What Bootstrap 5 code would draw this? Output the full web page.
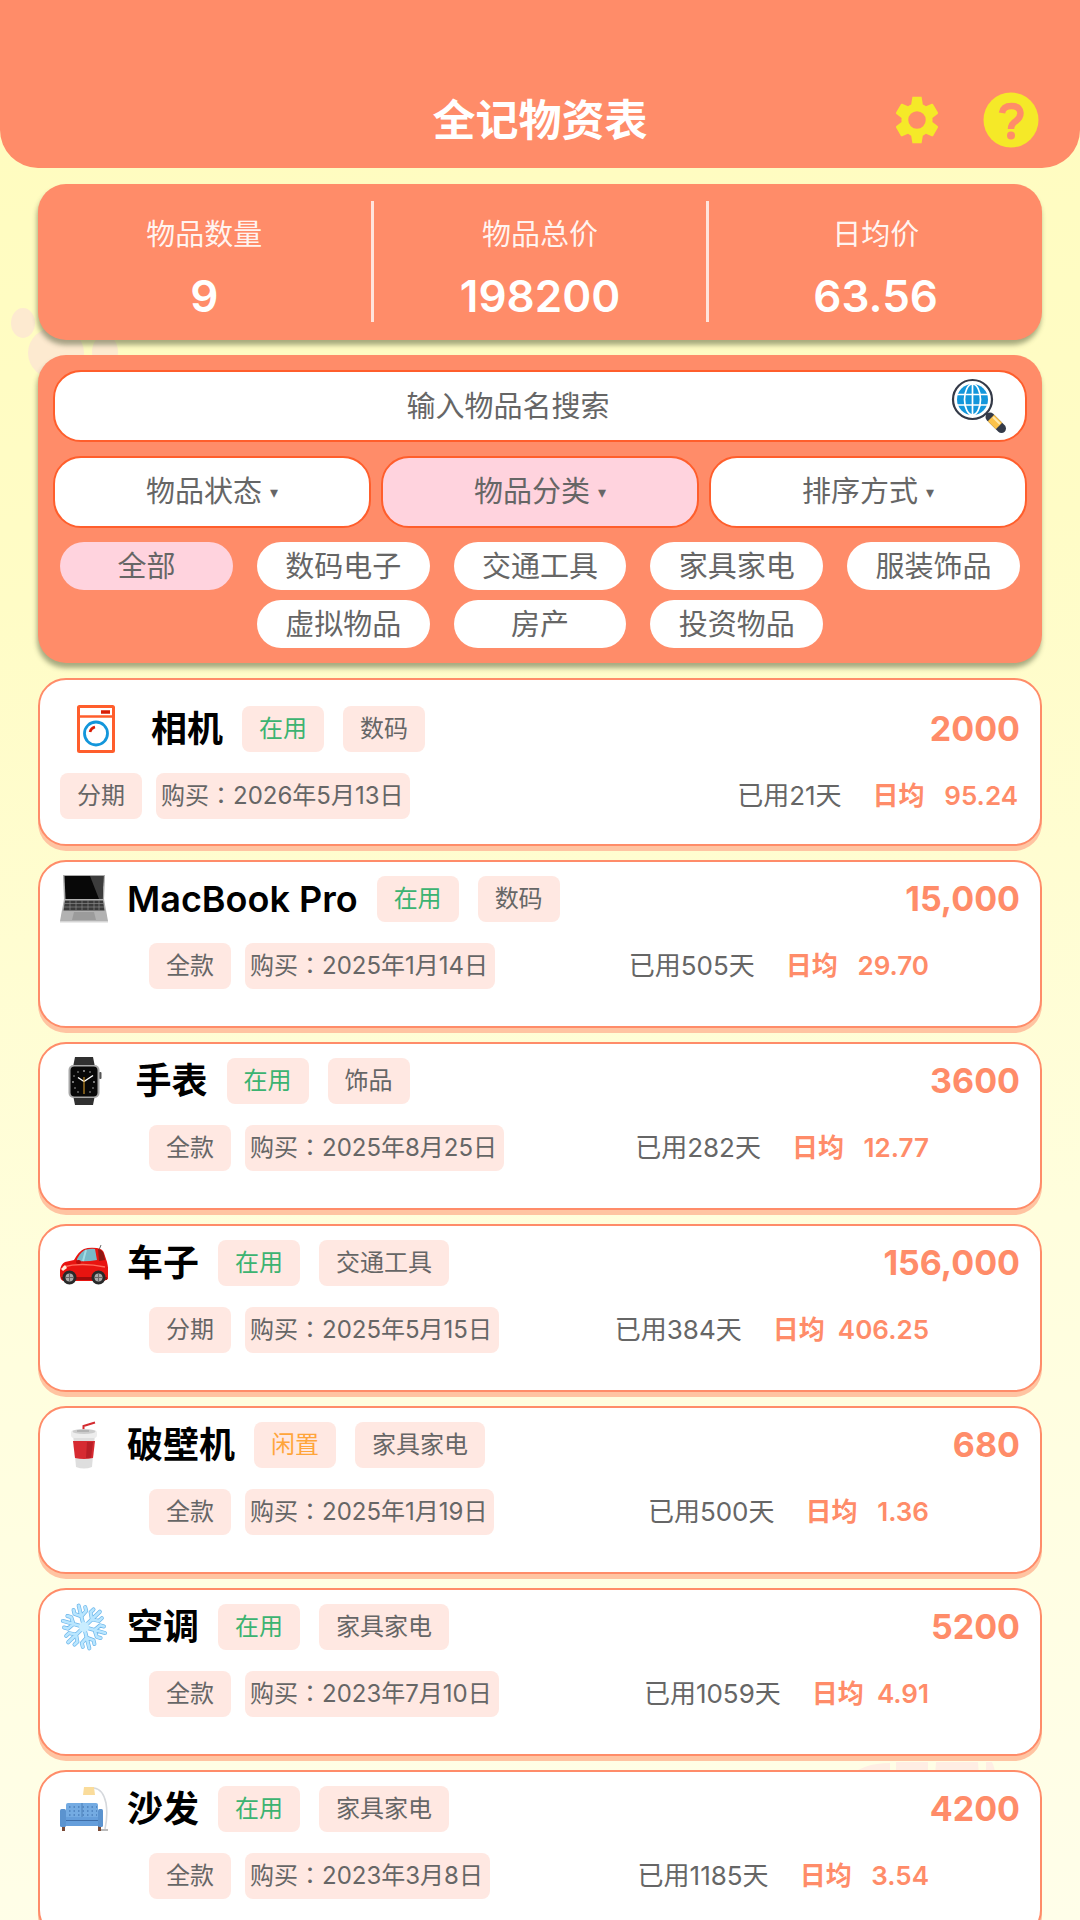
<!DOCTYPE html>
<html lang="zh-CN">
<head>
<meta charset="utf-8">
<meta name="viewport" content="width=device-width, initial-scale=1">
<title>全记物资表</title>
<link href="https://cdn.jsdelivr.net/npm/bootstrap@5.3.0/dist/css/bootstrap.min.css" rel="stylesheet">
<style>
:root{--coral:#ff8c69;--coral-deep:#ff5e2c;--blush:#ffd3de;--tag:#ffe8e2;--ink:#666}
body{font-family:Inter,"Noto Sans CJK SC",sans-serif;color:var(--ink);background:linear-gradient(175deg,#fffcbe 0%,#fffcc6 30%,#fffedd 65%,#fffee9 100%)}
.app-shell{height:100vh;overflow-y:auto;scrollbar-width:none;isolation:isolate}
.app-shell::-webkit-scrollbar{display:none}
.paw{position:absolute;z-index:-1}
.paw-left{left:8px;top:300px}
.paw-right{right:76px;top:1760px}
.app-header{background:var(--coral);height:168px;border-radius:0 0 38px 38px;padding:72px 42px 0}
.app-title{font-size:43px;line-height:96px;font-weight:700;color:#fff}
.header-tools{gap:41px;right:41px;top:92px}
.page-body{padding:16px 38px}
.panel{background:var(--coral);border-radius:28px;box-shadow:-1px 5px 5px rgba(60,70,40,.45)}
.stats{height:156px;padding:17px 0 18px;margin-bottom:15px}
.stat+.stat{border-left:3px solid #ffe4dc}
.stat-label{font-size:29px;line-height:34px;margin-top:17px;color:rgba(255,255,255,.92)}
.stat-value{font-size:44px;line-height:52px;margin-top:18px;font-weight:600;color:#fff}
.filters{padding:15px;margin-bottom:15px}
.pill-box{height:72px;border:2px solid var(--coral-deep);border-radius:28px;background:#fff;color:var(--ink);font-size:29px;line-height:40px}
.search-input{padding:14px 54px 14px 14px;text-align:center}
.search-input::placeholder{color:var(--ink);opacity:1}
.search-input:focus{outline:none;box-shadow:none}
.search-go{right:20px;top:8px}
.filter-row{gap:10px;margin-top:14px}
.filter-btn{padding:0}
.filter-btn.is-open,.chip.is-open{background:var(--blush)}
.caret{font:16px/16px "DejaVu Sans",sans-serif;margin-left:8px;vertical-align:4px}
.chips{margin-top:14px;padding:0 7px;gap:10px 24px}
.chip{flex:0 0 calc((100% - 96px)/5);height:48px;border:0;border-radius:24px;background:#fff;color:var(--ink);font-size:29px;line-height:46px;padding:2px 0 0}
.item{min-height:168px;border:2px solid var(--coral);border-radius:28px;background:#fff;box-shadow:0 5px 0 #ffc4a2;padding:13px 20px;margin-bottom:14px}
.item-line{min-height:46px}
.item-line+.item-line{margin-top:20px}
.item-inset{padding:0 89px}
.item-icon{width:48px;height:48px;margin-right:19px;flex:none}
.item-icon-wide{width:72px}
.item-name{font-size:36px;line-height:46px;font-weight:600;color:#000;margin:0 19px 0 0}
.item-name:lang(zh){font-weight:700}
.tag{display:inline-block;height:46px;line-height:45px;font-size:24px;border-radius:8px;background:var(--tag);padding:0 17px;margin-right:19px}
.tag-pay{margin-right:14px}
.tag-date{font-family:Inter,"Noto Sans CJK TC",sans-serif;padding:0 7px 0 5px;margin:0}
.in-use{color:#3cb371}
.idle{color:#ffa53a}
.price{font-size:34px;line-height:46px;font-weight:700;color:var(--coral)}
.usage{font-size:26px;line-height:42px}
.daily{color:var(--coral);font-weight:600;margin:0 2px 0 31px}
.daily b{font-weight:700}
</style>
</head>
<body>
<div class="app-shell position-relative">
  <svg class="paw paw-left" width="112" height="90" viewBox="0 0 112 90" fill="#fdead0" aria-hidden="true"><ellipse cx="15" cy="23" rx="12" ry="15"/><ellipse cx="48" cy="53" rx="28" ry="26"/><ellipse cx="97" cy="52" rx="13" ry="17"/></svg>
  <svg class="paw paw-right" width="156" height="60" viewBox="0 0 156 60" fill="#ffeee4" aria-hidden="true"><path d="M0 60V18Q14 3 42 3V60zM48 2h32v58H48zM88 2h42l4 58H84zM138 2h6q3 6 3 14h-9z"/></svg>

  <header class="app-header position-relative text-center">
    <h1 class="app-title m-0">全记物资表</h1>
    <div class="header-tools position-absolute d-flex align-items-center">
      <button type="button" class="btn p-0 border-0 d-flex" aria-label="设置"><svg width="50" height="50" viewBox="0 0 24 24" fill="#f5e928"><path d="M19.400 13a7.800 7.800 0 0 0 0-2l2.500-1.900a.6.600 0 0 0 .1-.8l-2.200-3.800a.6.600 0 0 0-.7-.3l-2.800 1.200a7.500 7.500 0 0 0-1.500-.9L14.200.8H9.800L9.200 4.500a7.500 7.500 0 0 0-1.500.9L4.900 4.200a.6.600 0 0 0-.7.300L2 8.300a.6.600 0 0 0 .1.800L4.600 11a7.800 7.800 0 0 0 0 2l-2.500 1.900a.6.600 0 0 0-.1.800l2.200 3.800c.1.300.4.400.7.300l2.800-1.200a7.500 7.500 0 0 0 1.500.9l.6 3.700h4.400l.6-3.700a7.500 7.500 0 0 0 1.500-.9l2.800 1.200c.3.100.6 0 .7-.3l2.200-3.800a.6.600 0 0 0-.1-.8zM12 16.200a4.200 4.200 0 1 1 0-8.400 4.200 4.200 0 0 1 0 8.400z"/></svg></button>
      <button type="button" class="btn p-0 border-0 d-flex" aria-label="帮助"><svg width="56" height="56" viewBox="0 0 56 56"><circle cx="28" cy="28" r="27.500" fill="#f5e928"/><path d="M19 21Q20 14 28.500 14T37.500 21q0 4.500-4.500 8-5 3-5 8" fill="none" stroke="#ff8c69" stroke-width="6.500"/><circle cx="28" cy="43.500" r="4" fill="#ff8c69"/></svg></button>
    </div>
  </header>

  <main class="page-body">
    <section class="panel stats row g-0 text-center">
      <div class="col stat"><div class="stat-label">物品数量</div><div class="stat-value">9</div></div>
      <div class="col stat"><div class="stat-label">物品总价</div><div class="stat-value">198200</div></div>
      <div class="col stat"><div class="stat-label">日均价</div><div class="stat-value">63.56</div></div>
    </section>

    <section class="panel filters">
      <form class="position-relative" role="search">
        <input type="search" class="pill-box search-input w-100 d-block" placeholder="输入物品名搜索" aria-label="输入物品名搜索">
        <button type="button" class="search-go btn p-0 border-0 position-absolute d-flex" aria-label="搜索"><svg width="56" height="56" viewBox="0 0 56 56"><path d="M35 35l5 5" stroke="#343a48" stroke-width="2.500"/><path d="M39 39l11.500 11.500" stroke="#343a48" stroke-width="9" stroke-linecap="round"/><path d="M40 40l8 8" stroke="#fbc24a" stroke-width="9"/><path d="M42 39l7 7" stroke="#ffe9ac" stroke-width="2"/><circle cx="21.500" cy="21.500" r="19.500" fill="#fff" stroke="#343a48" stroke-width="2.200"/><circle cx="21.500" cy="21.500" r="15.500" fill="#1296db"/><g fill="none" stroke="#fff" stroke-width="1.700"><ellipse cx="21.500" cy="21.500" rx="8" ry="15.500"/><path d="M21.500 6v32M6 16.500h32M6 27h32"/></g></svg></button>
      </form>
      <div class="filter-row d-flex">
        <button type="button" class="pill-box filter-btn flex-fill">物品状态<span class="caret">▾</span></button>
        <button type="button" class="pill-box filter-btn is-open flex-fill" aria-expanded="true">物品分类<span class="caret">▾</span></button>
        <button type="button" class="pill-box filter-btn flex-fill">排序方式<span class="caret">▾</span></button>
      </div>
      <div class="chips d-flex flex-wrap justify-content-center">
        <button type="button" class="chip is-open">全部</button>
        <button type="button" class="chip">数码电子</button>
        <button type="button" class="chip">交通工具</button>
        <button type="button" class="chip">家具家电</button>
        <button type="button" class="chip">服装饰品</button>
        <button type="button" class="chip">虚拟物品</button>
        <button type="button" class="chip">房产</button>
        <button type="button" class="chip">投资物品</button>
      </div>
    </section>

    <section>
      <article class="item d-flex flex-column justify-content-center">
        <div class="item-line d-flex align-items-center">
          <svg class="item-icon item-icon-wide" viewBox="0 0 72 48" aria-hidden="true"><rect x="18.500" y="1.500" width="35" height="45" rx="1" fill="#fff" stroke="#ff5e2c" stroke-width="3"/><path d="M18 11.500h36" stroke="#ff5e2c" stroke-width="2.500"/><path d="M41 7h9" stroke="#d81e06" stroke-width="3.500"/><circle cx="36" cy="28.500" r="11.500" fill="#fff" stroke="#1296db" stroke-width="2.800"/><path d="M30 27q1-4 5-5" fill="none" stroke="#d81e06" stroke-width="2.600"/></svg>
          <h2 class="item-name">相机</h2><span class="tag in-use">在用</span><span class="tag">数码</span>
          <span class="price ms-auto">2000</span>
        </div>
        <div class="item-line d-flex align-items-center">
          <span class="tag tag-pay">分期</span><span class="tag tag-date" lang="zh-TW">购买：2026年5月13日</span>
          <span class="usage ms-auto">已用21天</span><span class="usage daily"><b>日均</b>&nbsp;&nbsp;&nbsp;95.24</span>
        </div>
      </article>

      <article class="item">
        <div class="item-line d-flex align-items-center">
          <svg class="item-icon" viewBox="0 0 48 48" aria-hidden="true"><path d="M3 0h42l-1 25H4z" fill="#aaa"/><path d="M4.500 1h39l-1 23h-37z" fill="#080808"/><path d="M30 1h13.500l-1 23H39z" fill="#3c3c3c"/><path d="M4 24h40l4 22H0z" fill="#b2b2b2"/><path d="M5 25.500h38l1.500 10h-41z" fill="#3a3a3a"/><path d="M4.500 28.500h39M4 32h40M10 25v10M16 25v10M22 25v10M28 25v10M34 25v10M39 25v10" stroke="#8a8a8a" stroke-width=".7"/><path d="M14 37h20l2 8H12z" fill="#9b9b9b"/><path d="M0 46h48v1.500H0z" fill="#d5d5d5"/></svg>
          <h2 class="item-name" lang="en">MacBook Pro</h2><span class="tag in-use">在用</span><span class="tag">数码</span>
          <span class="price ms-auto">15,000</span>
        </div>
        <div class="item-line item-inset d-flex align-items-center">
          <span class="tag tag-pay">全款</span><span class="tag tag-date" lang="zh-TW">购买：2025年1月14日</span>
          <span class="usage ms-auto">已用505天</span><span class="usage daily"><b>日均</b>&nbsp;&nbsp;&nbsp;29.70</span>
        </div>
      </article>

      <article class="item">
        <div class="item-line d-flex align-items-center">
          <svg class="item-icon" viewBox="0 0 48 48" aria-hidden="true"><path d="M15 0h18l2 10H13zM13 38h22l-2 10H15z" fill="#303030"/><rect x="39" y="15" width="2.500" height="7" rx="1" fill="#555"/><rect x="8.500" y="8" width="31" height="33" rx="5" fill="#a8a8a8"/><rect x="10.500" y="9.500" width="27" height="30" rx="4" fill="#080808"/><path d="M24 24.500l-6-4M24 24.500l9-6" stroke="#fff" stroke-width="1.500"/><path d="M24 20v17" stroke="#e7a62a" stroke-width="1"/><g fill="#aaa"><circle cx="24" cy="14" r=".9"/><circle cx="18" cy="15" r=".8"/><circle cx="30" cy="15" r=".8"/><circle cx="14" cy="19" r=".8"/><circle cx="34" cy="25" r=".9"/><circle cx="13" cy="25" r=".9"/><circle cx="15" cy="31" r=".8"/><circle cx="33" cy="31" r=".8"/><circle cx="18" cy="35" r=".8"/><circle cx="30" cy="35" r=".8"/></g></svg>
          <h2 class="item-name">&nbsp;手表</h2><span class="tag in-use">在用</span><span class="tag">饰品</span>
          <span class="price ms-auto">3600</span>
        </div>
        <div class="item-line item-inset d-flex align-items-center">
          <span class="tag tag-pay">全款</span><span class="tag tag-date" lang="zh-TW">购买：2025年8月25日</span>
          <span class="usage ms-auto">已用282天</span><span class="usage daily"><b>日均</b>&nbsp;&nbsp;&nbsp;12.77</span>
        </div>
      </article>

      <article class="item">
        <div class="item-line d-flex align-items-center">
          <svg class="item-icon" viewBox="0 0 48 48" aria-hidden="true"><path d="M39 11l2-5" stroke="#666" stroke-width="1"/><path d="M0 37v-6q1-6 5-8l9-2q5-9 10-11 5-2 13-1 6 1 7 5l3 9q2 8 1 17l-4 2H3q-3-2-3-5z" fill="#e81410"/><path d="M17 20q4-8 9-9.500 5-1 9-.5l2 11q-10 2-20 1z" fill="#78b9c8"/><path d="M26 11l-3 11" stroke="#a3dbe5" stroke-width="2"/><path d="M38 10q5 1 6 6l1 5-6 1z" fill="#8f1712"/><path d="M3 28q18-5 42 0" fill="none" stroke="#ff6b5c" stroke-width="1.500"/><path d="M1 30l4-4 2 3-4 3z" fill="#fff0dc"/><rect x="16" y="21" width="5" height="4" rx="2" fill="#b70c0b"/><path d="M1 38h46v3H2z" fill="#9f0b0b"/><g stroke="#292929" stroke-width="3"><circle cx="9.500" cy="38.500" r="5.500" fill="#aaa"/><circle cx="38.500" cy="38.500" r="5.500" fill="#aaa"/></g><path d="M9.500 35v7M6 38.500h7M38.500 35v7M35 38.500h7" stroke="#666"/></svg>
          <h2 class="item-name">车子</h2><span class="tag in-use">在用</span><span class="tag">交通工具</span>
          <span class="price ms-auto">156,000</span>
        </div>
        <div class="item-line item-inset d-flex align-items-center">
          <span class="tag tag-pay">分期</span><span class="tag tag-date" lang="zh-TW">购买：2025年5月15日</span>
          <span class="usage ms-auto">已用384天</span><span class="usage daily"><b>日均</b>&nbsp;&nbsp;406.25</span>
        </div>
      </article>

      <article class="item">
        <div class="item-line d-flex align-items-center">
          <svg class="item-icon" viewBox="0 0 48 48" aria-hidden="true"><path d="M23.500 12V5L35 1.500" fill="none" stroke="#d42b30" stroke-width="2"/><path d="M13 13h22l-3 33q-8 3-16 0z" fill="#dedede"/><path d="M13 20h22l-2 17q-9 2-18 0z" fill="#d62a31"/><path d="M27 21h6l-2 16h-5z" fill="#b91e26"/><rect x="11" y="9" width="26" height="8" rx="3" fill="#ededed"/><ellipse cx="24" cy="10.500" rx="11.500" ry="2.500" fill="#ccc"/><path d="M17 10h12" stroke="#999"/></svg>
          <h2 class="item-name">破壁机</h2><span class="tag idle">闲置</span><span class="tag">家具家电</span>
          <span class="price ms-auto">680</span>
        </div>
        <div class="item-line item-inset d-flex align-items-center">
          <span class="tag tag-pay">全款</span><span class="tag tag-date" lang="zh-TW">购买：2025年1月19日</span>
          <span class="usage ms-auto">已用500天</span><span class="usage daily"><b>日均</b>&nbsp;&nbsp;&nbsp;1.36</span>
        </div>
      </article>

      <article class="item">
        <div class="item-line d-flex align-items-center">
          <svg class="item-icon" viewBox="0 0 48 48" aria-hidden="true"><defs><g id="arm"><path d="M24 24V2M24 13l-6-4V5M24 13l6-4V5"/></g><g id="flake"><use href="#arm"/><use href="#arm" transform="rotate(60 24 24)"/><use href="#arm" transform="rotate(120 24 24)"/><use href="#arm" transform="rotate(180 24 24)"/><use href="#arm" transform="rotate(240 24 24)"/><use href="#arm" transform="rotate(300 24 24)"/></g></defs><g transform="rotate(-14 24 24)" fill="none" stroke-linecap="round" stroke-linejoin="round"><use href="#flake" stroke="#6db6ea" stroke-width="4"/><use href="#flake" stroke="#b9e6ff" stroke-width="2.600"/></g><circle cx="24" cy="24" r="5" fill="#c9edff"/></svg>
          <h2 class="item-name">空调</h2><span class="tag in-use">在用</span><span class="tag">家具家电</span>
          <span class="price ms-auto">5200</span>
        </div>
        <div class="item-line item-inset d-flex align-items-center">
          <span class="tag tag-pay">全款</span><span class="tag tag-date" lang="zh-TW">购买：2023年7月10日</span>
          <span class="usage ms-auto">已用1059天</span><span class="usage daily"><b>日均</b>&nbsp;&nbsp;4.91</span>
        </div>
      </article>

      <article class="item">
        <div class="item-line d-flex align-items-center">
          <svg class="item-icon" viewBox="0 0 48 48" aria-hidden="true"><path d="M34 3q9 1 12 15 2 12-1 26" fill="none" stroke="#d5d8dc" stroke-width="1.600"/><path d="M41 45h7" stroke="#bbb" stroke-width="2"/><path d="M24 2h10l1 8H23z" fill="#fadc9b"/><path d="M2 41h3v5H2zM38 41h3v5h-3z" fill="#7a4a36"/><rect x="6" y="18" width="32" height="18" rx="2" fill="#74abe2"/><path d="M22 18v16" stroke="#4d80b8"/><g stroke="#4a7fba" stroke-width="1.500" stroke-dasharray="1.500 3"><path d="M9 22h28M9 26h28M9 30h28"/></g><rect x="3" y="32" width="38" height="9" fill="#659edb"/><path d="M5 35.500h34" stroke="#3f6ea8"/><rect x="0" y="24" width="6" height="18" rx="1.500" fill="#5b93cf"/><rect x="38" y="24" width="5" height="18" rx="1.500" fill="#5b93cf"/></svg>
          <h2 class="item-name">沙发</h2><span class="tag in-use">在用</span><span class="tag">家具家电</span>
          <span class="price ms-auto">4200</span>
        </div>
        <div class="item-line item-inset d-flex align-items-center">
          <span class="tag tag-pay">全款</span><span class="tag tag-date" lang="zh-TW">购买：2023年3月8日</span>
          <span class="usage ms-auto">已用1185天</span><span class="usage daily"><b>日均</b>&nbsp;&nbsp;&nbsp;3.54</span>
        </div>
      </article>
    </section>
  </main>
</div>
<script src="https://cdn.jsdelivr.net/npm/bootstrap@5.3.0/dist/js/bootstrap.bundle.min.js"></script>
</body>
</html>
